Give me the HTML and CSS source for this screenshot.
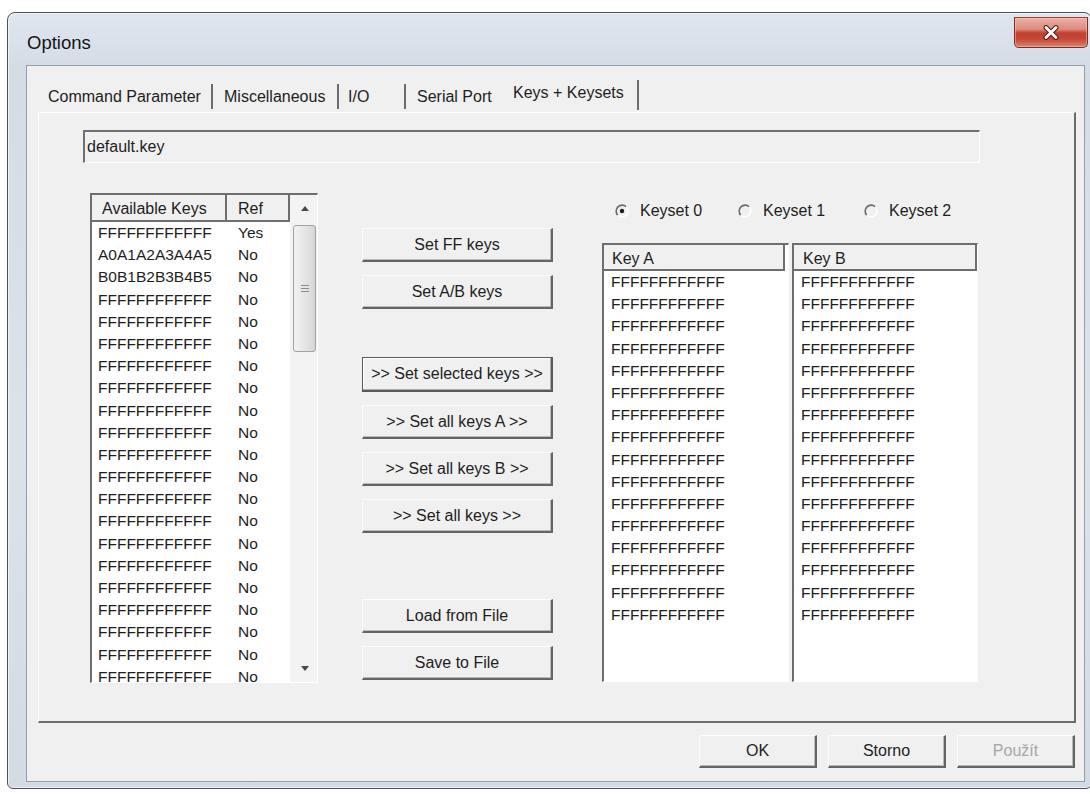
FILE: index.html
```html
<!DOCTYPE html>
<html lang="cs">
<head>
<meta charset="utf-8">
<title>Options</title>
<link rel="stylesheet" href="styles.css">
</head>
<body>
<div class="window">
  <div class="titlebar">
    <span class="title">Options</span>
    <button class="close-btn" aria-label="Close">
      <svg width="18" height="15" viewBox="0 0 18 15">
        <path d="M4 2.5 L14 12.5 M14 2.5 L4 12.5" stroke="#5c1f19" stroke-width="5" stroke-linecap="round"/>
        <path d="M4 2.5 L14 12.5 M14 2.5 L4 12.5" stroke="#ffffff" stroke-width="2.8" stroke-linecap="round"/>
      </svg>
    </button>
  </div>

  <div class="client">
    <div class="tabs">
      <span class="tab tab-cmd sep">Command Parameter</span>
      <span class="tab tab-misc sep">Miscellaneous</span>
      <span class="tab tab-io sep">I/O</span>
      <span class="tab tab-serial">Serial Port</span>
      <span class="tab tab-keys sep">Keys + Keysets</span>
    </div>

    <div class="tab-panel">
      <div class="file-field">default.key</div>

      <div class="keys-area">
        <!-- list of stored keys with reference flag -->
        <div class="listbox avail">
          <div class="table">
            <div class="grid-head">
              <span>Available Keys</span>
              <span class="ref">Ref</span>
            </div>
            <div class="grid-row"><span>FFFFFFFFFFFF</span><span class="ref">Yes</span></div>
            <div class="grid-row"><span>A0A1A2A3A4A5</span><span class="ref">No</span></div>
            <div class="grid-row"><span>B0B1B2B3B4B5</span><span class="ref">No</span></div>
            <div class="grid-row"><span>FFFFFFFFFFFF</span><span class="ref">No</span></div>
            <div class="grid-row"><span>FFFFFFFFFFFF</span><span class="ref">No</span></div>
            <div class="grid-row"><span>FFFFFFFFFFFF</span><span class="ref">No</span></div>
            <div class="grid-row"><span>FFFFFFFFFFFF</span><span class="ref">No</span></div>
            <div class="grid-row"><span>FFFFFFFFFFFF</span><span class="ref">No</span></div>
            <div class="grid-row"><span>FFFFFFFFFFFF</span><span class="ref">No</span></div>
            <div class="grid-row"><span>FFFFFFFFFFFF</span><span class="ref">No</span></div>
            <div class="grid-row"><span>FFFFFFFFFFFF</span><span class="ref">No</span></div>
            <div class="grid-row"><span>FFFFFFFFFFFF</span><span class="ref">No</span></div>
            <div class="grid-row"><span>FFFFFFFFFFFF</span><span class="ref">No</span></div>
            <div class="grid-row"><span>FFFFFFFFFFFF</span><span class="ref">No</span></div>
            <div class="grid-row"><span>FFFFFFFFFFFF</span><span class="ref">No</span></div>
            <div class="grid-row"><span>FFFFFFFFFFFF</span><span class="ref">No</span></div>
            <div class="grid-row"><span>FFFFFFFFFFFF</span><span class="ref">No</span></div>
            <div class="grid-row"><span>FFFFFFFFFFFF</span><span class="ref">No</span></div>
            <div class="grid-row"><span>FFFFFFFFFFFF</span><span class="ref">No</span></div>
            <div class="grid-row"><span>FFFFFFFFFFFF</span><span class="ref">No</span></div>
            <div class="grid-row"><span>FFFFFFFFFFFF</span><span class="ref">No</span></div>
          </div>
          <div class="scrollbar">
            <div class="sb-btn">
              <svg width="8" height="5" viewBox="0 0 8 5"><path d="M0 5 L4 0 L8 5 Z" fill="#4a4a4a"/></svg>
            </div>
            <div class="sb-track">
              <div class="sb-thumb">
                <svg width="8" height="9" viewBox="0 0 8 9">
                  <path d="M0 1.5 H8 M0 4.5 H8 M0 7.5 H8" stroke="#8c8c8c" stroke-width="1"/>
                </svg>
              </div>
            </div>
            <div class="sb-btn">
              <svg width="8" height="5" viewBox="0 0 8 5"><path d="M0 0 L4 5 L8 0 Z" fill="#4a4a4a"/></svg>
            </div>
          </div>
        </div>

        <!-- transfer actions -->
        <div class="actions">
          <div class="btn-group">
            <button class="btn">Set FF keys</button>
            <button class="btn">Set A/B keys</button>
          </div>
          <div class="btn-group group-transfer">
            <button class="btn default">&gt;&gt; Set selected keys &gt;&gt;</button>
            <button class="btn">&gt;&gt; Set all keys A &gt;&gt;</button>
            <button class="btn">&gt;&gt; Set all keys B &gt;&gt;</button>
            <button class="btn">&gt;&gt; Set all keys &gt;&gt;</button>
          </div>
          <div class="btn-group group-file">
            <button class="btn">Load from File</button>
            <button class="btn">Save to File</button>
          </div>
        </div>

        <!-- keyset selection and sector keys -->
        <div class="keysets">
          <div class="radios">
            <label class="radio r0">
              <svg width="14" height="14" viewBox="0 0 14 14">
                <path d="M2.76 11.24 A6 6 0 0 1 11.24 2.76" fill="none" stroke="#6a6a6a" stroke-width="1.6"/>
                <path d="M11.24 2.76 A6 6 0 0 1 2.76 11.24" fill="none" stroke="#ffffff" stroke-width="1.4"/>
                <circle cx="7" cy="7" r="2.2" fill="#1e1e1e"/>
              </svg>
              <span>Keyset 0</span>
            </label>
            <label class="radio r1">
              <svg width="14" height="14" viewBox="0 0 14 14">
                <path d="M2.76 11.24 A6 6 0 0 1 11.24 2.76" fill="none" stroke="#6a6a6a" stroke-width="1.6"/>
                <path d="M11.24 2.76 A6 6 0 0 1 2.76 11.24" fill="none" stroke="#ffffff" stroke-width="1.4"/>
              </svg>
              <span>Keyset 1</span>
            </label>
            <label class="radio r2">
              <svg width="14" height="14" viewBox="0 0 14 14">
                <path d="M2.76 11.24 A6 6 0 0 1 11.24 2.76" fill="none" stroke="#6a6a6a" stroke-width="1.6"/>
                <path d="M11.24 2.76 A6 6 0 0 1 2.76 11.24" fill="none" stroke="#ffffff" stroke-width="1.4"/>
              </svg>
              <span>Keyset 2</span>
            </label>
          </div>

          <div class="keylists">
            <div class="listbox keylist keylist-a">
              <div class="kl-head">Key A</div>
              <div class="kl-row">FFFFFFFFFFFF</div>
              <div class="kl-row">FFFFFFFFFFFF</div>
              <div class="kl-row">FFFFFFFFFFFF</div>
              <div class="kl-row">FFFFFFFFFFFF</div>
              <div class="kl-row">FFFFFFFFFFFF</div>
              <div class="kl-row">FFFFFFFFFFFF</div>
              <div class="kl-row">FFFFFFFFFFFF</div>
              <div class="kl-row">FFFFFFFFFFFF</div>
              <div class="kl-row">FFFFFFFFFFFF</div>
              <div class="kl-row">FFFFFFFFFFFF</div>
              <div class="kl-row">FFFFFFFFFFFF</div>
              <div class="kl-row">FFFFFFFFFFFF</div>
              <div class="kl-row">FFFFFFFFFFFF</div>
              <div class="kl-row">FFFFFFFFFFFF</div>
              <div class="kl-row">FFFFFFFFFFFF</div>
              <div class="kl-row">FFFFFFFFFFFF</div>
            </div>
            <div class="listbox keylist keylist-b">
              <div class="kl-head">Key B</div>
              <div class="kl-row">FFFFFFFFFFFF</div>
              <div class="kl-row">FFFFFFFFFFFF</div>
              <div class="kl-row">FFFFFFFFFFFF</div>
              <div class="kl-row">FFFFFFFFFFFF</div>
              <div class="kl-row">FFFFFFFFFFFF</div>
              <div class="kl-row">FFFFFFFFFFFF</div>
              <div class="kl-row">FFFFFFFFFFFF</div>
              <div class="kl-row">FFFFFFFFFFFF</div>
              <div class="kl-row">FFFFFFFFFFFF</div>
              <div class="kl-row">FFFFFFFFFFFF</div>
              <div class="kl-row">FFFFFFFFFFFF</div>
              <div class="kl-row">FFFFFFFFFFFF</div>
              <div class="kl-row">FFFFFFFFFFFF</div>
              <div class="kl-row">FFFFFFFFFFFF</div>
              <div class="kl-row">FFFFFFFFFFFF</div>
              <div class="kl-row">FFFFFFFFFFFF</div>
            </div>
          </div>
        </div>
      </div>
    </div>

    <div class="dialog-buttons">
      <button class="btn dlg">OK</button>
      <button class="btn dlg">Storno</button>
      <button class="btn dlg" disabled>Použít</button>
    </div>
  </div>
</div>
</body>
</html>
```

FILE: styles.css
```css
* {
  box-sizing: border-box;
}

html,
body {
  margin: 0;
}

body {
  width: 1090px;
  height: 794px;
  overflow: hidden;
  background: #ffffff;
  font-family: "Liberation Sans", Arial, sans-serif;
  font-size: 16px;
  color: #1e1e1e;
}

/* ---------- window frame ---------- */
.window {
  margin: 12px 0 0 7px;
  width: 1085px;
  height: 777px;
  border: 1px solid #4f4f4f;
  border-radius: 8px 8px 6px 6px;
  background: linear-gradient(180deg, #dfe6ee 0%, #d4dce6 7%, #dbe2ea 55%, #d3dbe5 100%);
  box-shadow: inset 0 0 0 1px rgba(255, 255, 255, 0.6);
  padding: 0 6px 6px 18px;
  display: flex;
  flex-direction: column;
}

.titlebar {
  flex: none;
  height: 52px;
  margin: 0 -6px 0 -18px;
  padding-left: 19px;
  display: flex;
  align-items: flex-start;
  justify-content: space-between;
}

.title {
  margin-top: 19px;
  line-height: 22px;
  font-size: 18.5px;
  color: #141414;
}

.close-btn {
  margin: 4px 3px 0 0;
  width: 74px;
  height: 31px;
  padding: 0;
  border: 1px solid #7e2c25;
  border-top-color: #9a3e35;
  border-radius: 0 0 5px 5px;
  background: linear-gradient(180deg, #eab1a5 0%, #da8c7f 38%, #c3402f 52%, #c54736 72%, #da8569 100%);
  box-shadow: inset 0 0 0 1px rgba(255, 210, 200, 0.45);
  display: flex;
  align-items: center;
  justify-content: center;
}

/* ---------- client area ---------- */
.client {
  flex: 1;
  border: 1px solid #939da8;
  background: #f0f0f0;
  padding: 14px 8px 0 11px;
  display: flex;
  flex-direction: column;
}

.tabs {
  flex: none;
  height: 32px;
  display: flex;
  align-items: flex-start;
}

.tab {
  margin-top: 4px;
  height: 25px;
  line-height: 25px;
  padding-left: 10px;
  white-space: nowrap;
}

.tab.sep {
  border-right: 2px solid #6c6c6c;
}

.tab-cmd {
  width: 175px;
}

.tab-misc {
  width: 126px;
  padding-left: 11px;
}

.tab-io {
  width: 67px;
  padding-left: 9px;
}

.tab-serial {
  width: 97px;
  padding-left: 11px;
}

.tab-keys {
  width: 136px;
  margin-top: 0;
  height: 30px;
  line-height: 26px;
}

.tab-panel {
  flex: none;
  height: 611px;
  border-top: 1px solid #fcfcfc;
  border-left: 1px solid #fcfcfc;
  border-right: 2px solid #6c6c6c;
  border-bottom: 2px solid #6c6c6c;
  padding: 17px 0 0 44px;
}

.file-field {
  width: 897px;
  height: 33px;
  line-height: 30px;
  padding-left: 2px;
  border-top: 2px solid #707070;
  border-left: 2px solid #707070;
  border-right: 1px solid #ffffff;
  border-bottom: 1px solid #ffffff;
  background: #f0f0f0;
}

.keys-area {
  margin: 30px 0 0 7px;
  display: flex;
  align-items: flex-start;
}

/* ---------- list boxes ---------- */
.listbox {
  border-top: 2px solid #6e6e6e;
  border-left: 2px solid #6e6e6e;
  border-right: 1px solid #ffffff;
  border-bottom: 1px solid #ffffff;
  background: #ffffff;
}

.avail {
  width: 228px;
  height: 490px;
  display: flex;
}

.avail .table {
  width: 198px;
  overflow: hidden;
}

.grid-head,
.grid-row {
  display: grid;
  grid-template-columns: 135px 63px;
}

.grid-head {
  height: 27px;
  border-bottom: 2px solid #6e6e6e;
  background: #f0f0f0;
}

.grid-head span {
  padding: 3px 0 0 10px;
  line-height: 22px;
  border-right: 2px solid #6e6e6e;
  white-space: nowrap;
}

.grid-head .ref {
  padding-left: 11px;
}

.grid-row {
  height: 22.2px;
  line-height: 22.2px;
  font-size: 15.5px;
}

.grid-row span {
  padding-left: 6px;
  white-space: nowrap;
}

.grid-row .ref {
  padding-left: 11px;
}

.scrollbar {
  width: 27px;
  display: flex;
  flex-direction: column;
  background: #f3f3f3;
}

.sb-btn {
  flex: none;
  height: 27px;
  display: flex;
  align-items: center;
  justify-content: center;
  padding-left: 2px;
}

.sb-track {
  flex: 1;
  padding: 3px 0 0 3px;
}

.sb-thumb {
  width: 23px;
  height: 127px;
  border: 1px solid #a2a2a2;
  border-radius: 3px;
  background: linear-gradient(90deg, #f2f2f2 0%, #e4e4e4 55%, #d6d6d6 100%);
  display: flex;
  align-items: center;
  justify-content: center;
}

/* ---------- action buttons ---------- */
.actions {
  margin-left: 44px;
  width: 191px;
  padding-top: 35px;
  display: flex;
  flex-direction: column;
}

.btn-group {
  display: flex;
  flex-direction: column;
  gap: 13px;
}

.group-transfer {
  margin-top: 48px;
}

.group-file {
  margin-top: 66px;
}

.btn {
  font: inherit;
  color: #1e1e1e;
  background: #f0f0f0;
  height: 34px;
  padding: 0;
  text-align: center;
  white-space: nowrap;
  border-style: solid;
  border-width: 1px 2px 2px 1px;
  border-color: #fbfbfb #646464 #646464 #fbfbfb;
  box-shadow: inset -1px -1px 0 #b9b9b9;
}

.btn.default {
  height: 35px;
  border-color: #5a5a5a;
  box-shadow: inset -1px -1px 0 #acacac, inset 1px 1px 0 #ffffff;
}

.btn:disabled {
  color: #a6a6a6;
}

/* ---------- keysets ---------- */
.keysets {
  margin-left: 49px;
  width: 376px;
}

.radios {
  margin-top: 8px;
  height: 20px;
  padding-left: 13px;
  display: flex;
  align-items: center;
}

.radio {
  display: flex;
  align-items: center;
  gap: 11px;
  white-space: nowrap;
}

.radio svg {
  flex: none;
}

.r0 {
  width: 123px;
}

.r1 {
  width: 126px;
}

.keylists {
  margin-top: 22px;
  display: flex;
  gap: 3px;
}

.keylist {
  height: 439px;
}

.keylist-a {
  width: 187px;
}

.keylist-b {
  width: 186px;
}

.kl-head {
  height: 26px;
  padding: 3px 0 0 8px;
  line-height: 21px;
  border-bottom: 2px solid #6e6e6e;
  border-right: 2px solid #6e6e6e;
  background: #f0f0f0;
}

.keylist-a .kl-head {
  width: 181px;
}

.keylist-b .kl-head {
  width: 183px;
  padding-left: 9px;
}

.kl-row {
  height: 22.2px;
  line-height: 22.2px;
  padding-left: 7px;
  font-size: 15.5px;
}

/* ---------- dialog buttons ---------- */
.dialog-buttons {
  flex: none;
  margin-top: 12px;
  padding-right: 1px;
  display: flex;
  justify-content: flex-end;
  gap: 11px;
}

.btn.dlg {
  width: 118px;
  height: 33px;
}
```
